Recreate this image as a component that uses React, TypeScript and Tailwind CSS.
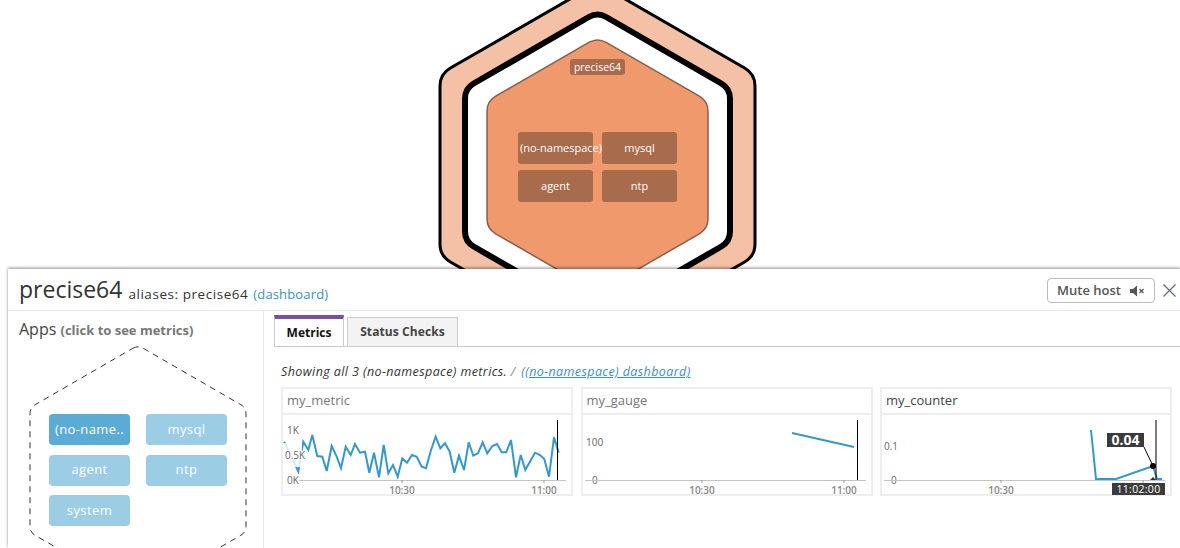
const sans = "font-['Open_Sans',sans-serif]";

// rounded pointy-top hexagon
const hexPath = (cx: number, cy: number, halfW: number, r: number) => {
  const rise = halfW * 0.57735;
  const side = rise * 2;
  const v = [
    [cx, cy - side],
    [cx + halfW, cy - rise],
    [cx + halfW, cy + rise],
    [cx, cy + side],
    [cx - halfW, cy + rise],
    [cx - halfW, cy - rise],
  ];
  let d = "";
  v.forEach((p, i) => {
    const prev = v[(i + 5) % 6];
    const next = v[(i + 1) % 6];
    const toward = (a: number[], b: number[]) => {
      const len = Math.hypot(b[0] - a[0], b[1] - a[1]);
      return [a[0] + ((b[0] - a[0]) / len) * r, a[1] + ((b[1] - a[1]) / len) * r];
    };
    const a = toward(p, prev);
    const b = toward(p, next);
    d += `${i === 0 ? "M" : "L"}${a[0]} ${a[1]} Q${p[0]} ${p[1]} ${b[0]} ${b[1]} `;
  });
  return d + "Z";
};

const metricLine = [
  [42, 395], [60, 430], [85, 485], [100, 395], [115, 420], [127, 375], [142, 438], [157, 440], [170, 483], [185, 408],
  [200, 440], [213, 475], [227, 410], [242, 435], [255, 402], [270, 428], [285, 425], [298, 488], [312, 428], [327, 502],
  [341, 405], [355, 490], [369, 465], [383, 500], [397, 445], [411, 458], [426, 435], [440, 440], [455, 470], [468, 475],
  [483, 420], [497, 380], [511, 415], [525, 400], [539, 425], [553, 488], [567, 437], [582, 480], [596, 397], [610, 437],
  [624, 430], [638, 397], [652, 430], [667, 408], [681, 402], [695, 427], [709, 427], [723, 390], [738, 502], [752, 435],
  [766, 480], [795, 428], [810, 435], [823, 447], [837, 500], [852, 382], [866, 428],
]
  .map(([x, y]) => `${(x / 3 - 13).toFixed(1)},${(y / 3 - 106).toFixed(1)}`)
  .join(" ");

const AxisLabel = ({ x, y, children, halo = 2 }: any) => (
  <text x={x} y={y} stroke="#fff" strokeWidth={halo} paintOrder="stroke" className="fill-[#666] text-[10px]">
    {children}
  </text>
);

const Axis = ({ from, to, labels = true }: { from: number; to: number; labels?: boolean }) => (
  <>
    <line x1={from} x2={to} y1={64.5} y2={64.5} stroke="#c4c4c4" />
    <line x1={119} x2={119} y1={64} y2={67} stroke="#999" />
    <line x1={261} x2={261} y1={64} y2={67} stroke="#999" />
    <text x={119} y={78} textAnchor="middle" className="fill-[#888] text-[10px] font-semibold">
      10:30
    </text>
    {labels && (
      <text x={261} y={78} textAnchor="middle" className="fill-[#888] text-[10px] font-semibold">
        11:00
      </text>
    )}
  </>
);

const Card = ({ title, titleClass = "text-[#777]", children }: any) => (
  <div className="relative h-[109px] w-[292px] border-2 border-[#eeeeee] bg-white">
    <div className={`h-[26px] border-b-2 border-[#eeeeee] pl-[4px] text-[13px] leading-[22px] ${titleClass}`}>{title}</div>
    {children}
  </div>
);

const ChartSvg = ({ children }: any) => (
  <svg width={288} height={78} className="mt-px block overflow-visible">
    {children}
  </svg>
);

const Node = ({ children, className = "justify-center" }: any) => (
  <div className={`flex h-8 w-[75px] items-center whitespace-nowrap rounded-[3px] bg-[#a86b4c] text-[11px] text-white ${className}`}>
    {children}
  </div>
);

const AppButton = ({ children, active }: any) => (
  <div
    className={`flex h-[31px] w-[81px] items-center justify-center rounded-[4px] text-[13px] tracking-[0.4px] text-white ${
      active ? "bg-[#5bacd5]" : "bg-[#9bcde5]"
    }`}
  >
    {children}
  </div>
);

export default function App() {
  return (
    <div className={`h-[548px] w-[1180px] overflow-hidden bg-white ${sans}`}>
      {/* host hexagon */}
      <div className="relative h-[269px] w-full overflow-hidden">
        <svg width={1180} height={320} className="absolute left-0 top-0">
          <path d={hexPath(597.5, 165, 157.5, 12)} fill="#f5c1a6" stroke="#000" strokeWidth={3} />
          <path d={hexPath(597.5, 165, 132.5, 10)} fill="#fff" stroke="#000" strokeWidth={6} />
          <path d={hexPath(597.5, 165, 110.5, 10)} fill="#f0996c" stroke="#85604d" strokeWidth={1.5} />
        </svg>
        <div className="absolute left-[570px] top-[59px] flex h-4 w-[55px] items-center justify-center rounded-[3px] bg-[#a86b4c] pt-px text-[10.5px] text-white">
          precise64
        </div>
        <div className="absolute left-[518px] top-[132px] grid grid-cols-[75px_75px] gap-x-[9px] gap-y-[6px]">
          <Node className="justify-start pl-[2px] tracking-[-0.02px]">(no-namespace)</Node>
          <Node>mysql</Node>
          <Node>agent</Node>
          <Node>ntp</Node>
        </div>
      </div>

      {/* host detail panel */}
      <div className="relative ml-2 h-[279px] bg-white shadow-[0_-1px_3px_rgba(0,0,0,0.45)]">
        <div className="flex h-[42px] items-center border-b border-[#e8e8e8] pl-[11px] pr-1">
          <span className="text-[23px] leading-none text-[#333]">precise64</span>
          <span className="ml-[6px] mt-[10px] text-[13.5px] tracking-[0.55px] text-[#333]">aliases: precise64</span>
          <span className="ml-[5px] mt-[10px] text-[13px] tracking-[0.15px] text-[#3d8fc4]">(dashboard)</span>
          <div className="ml-auto mt-[2px] flex h-[25px] w-[108px] items-center justify-center gap-[9px] rounded-[4px] border border-[#bbbbbb] text-[13px] font-semibold text-[#555]">
            Mute host
            <svg width={15} height={12} viewBox="0 0 15 12">
              <path d="M0 4h3l4-3.5v11L3 8H0z" fill="#555" />
              <path d="M9.5 4l4 4M13.5 4l-4 4" stroke="#555" strokeWidth={1.3} />
            </svg>
          </div>
          <svg width={13} height={13} viewBox="0 0 13 13" className="ml-[8px] mt-[2px]">
            <path d="M0.5 0.5l12 12M12.5 0.5l-12 12" stroke="#5f6b78" strokeWidth={1.2} />
          </svg>
        </div>

        <div className="flex h-[237px]">
          <div className="relative w-[256px] shrink-0 border-r border-[#e8e8e8] pl-[11px] pt-[7px]">
            <div className="whitespace-nowrap text-[16px] leading-[22px] text-[#444]">
              Apps <span className="text-[13px] font-bold text-[#777]">(click to see metrics)</span>
            </div>
            <svg width={250} height={237} className="absolute left-0 top-0 overflow-hidden">
              <path
                d={hexPath(130, 159, 108, 6)}
                fill="none"
                stroke="#333"
                strokeWidth={1}
                strokeDasharray="6 5"
              />
            </svg>
            <div className="absolute left-[41px] top-[103px] grid grid-cols-[81px_81px] gap-x-4 gap-y-[9.5px]">
              <AppButton active>(no-name..</AppButton>
              <AppButton>mysql</AppButton>
              <AppButton>agent</AppButton>
              <AppButton>ntp</AppButton>
              <AppButton>system</AppButton>
            </div>
          </div>

          <div className="min-w-0 flex-1 pl-[10px] pt-[5px]">
            <div className="flex h-[31px] items-end gap-[3px] border-b border-[#cccccc]">
              <div className="flex h-[31px] w-[70px] items-center justify-center border-l border-r border-t-4 border-[#cccccc] border-t-[#7a4ea3] bg-white text-[12px] font-bold text-[#111]">
                Metrics
              </div>
              <div className="flex h-[29px] w-[111px] items-center justify-center border border-b-0 border-[#cccccc] bg-[#f3f3f3] text-[12px] font-bold tracking-[0.1px] text-[#444]">
                Status Checks
              </div>
            </div>
            <div className="ml-[7px] mt-[16px] whitespace-nowrap text-[12.5px] italic leading-[17px] tracking-[0.4px] text-[#333]">
              Showing all 3 (no-namespace) metrics. <span className="text-[#888]">/</span>{" "}
              <span className="ml-[2px] text-[#3d8fc4] underline">((no-namespace) dashboard)</span>
            </div>
            <div className="ml-[7px] mt-[7px] flex gap-[7.5px]">
              <Card title="my_metric">
                <ChartSvg>
                  <polyline points={metricLine} fill="none" stroke="#3498cd" strokeWidth={2} />
                  <rect x={0} y={27} width={19} height={24} fill="#fff" opacity={0.8} />
                  <AxisLabel x={4} y={18} halo={3}>1K</AxisLabel>
                  <AxisLabel x={2} y={43} halo={2}>0.5K</AxisLabel>
                  <AxisLabel x={4} y={68} halo={3}>0K</AxisLabel>
                  <Axis from={16} to={283} />
                  <line x1={274.5} x2={274.5} y1={4} y2={64} stroke="#000" />
                </ChartSvg>
              </Card>
              <Card title="my_gauge">
                <ChartSvg>
                  <polyline points="209,17 271,31" fill="none" stroke="#3498cd" strokeWidth={2} />
                  <AxisLabel x={3} y={30}>100</AxisLabel>
                  <AxisLabel x={9} y={68}>0</AxisLabel>
                  <Axis from={2} to={283} />
                  <line x1={274.5} x2={274.5} y1={4} y2={64} stroke="#000" />
                </ChartSvg>
              </Card>
              <Card title="my_counter" titleClass="text-[#444]">
                <ChartSvg>
                  <polyline
                    points="209,14 214,63 234,63 271,50 275,63 280,63"
                    fill="none"
                    stroke="#3498cd"
                    strokeWidth={2}
                  />
                  <AxisLabel x={2} y={34}>0.1</AxisLabel>
                  <AxisLabel x={9} y={68}>0</AxisLabel>
                  <Axis from={2} to={283} labels={false} />
                  <line x1={274} x2={274} y1={4} y2={64} stroke="#000" />
                  <line x1={262} x2={271} y1={31} y2={50} stroke="#000" />
                  <circle cx={271} cy={50} r={3} fill="#000" />
                  <path d="M268 64l3-3 3 3z" fill="#333" />
                </ChartSvg>
                <div className="absolute left-[225px] top-[44px] flex h-[14px] w-[37px] items-center justify-center bg-[#3b3b3b] text-[14px] font-bold leading-none text-white">
                  0.04
                </div>
                <div className="absolute left-[230px] top-[94px] flex h-[12px] w-[53px] items-center justify-center bg-[#3b3b3b] text-[10.5px] leading-none tracking-[0.3px] text-white">
                  11:02:00
                </div>
              </Card>
            </div>
          </div>
        </div>
      </div>
    </div>
  );
}
